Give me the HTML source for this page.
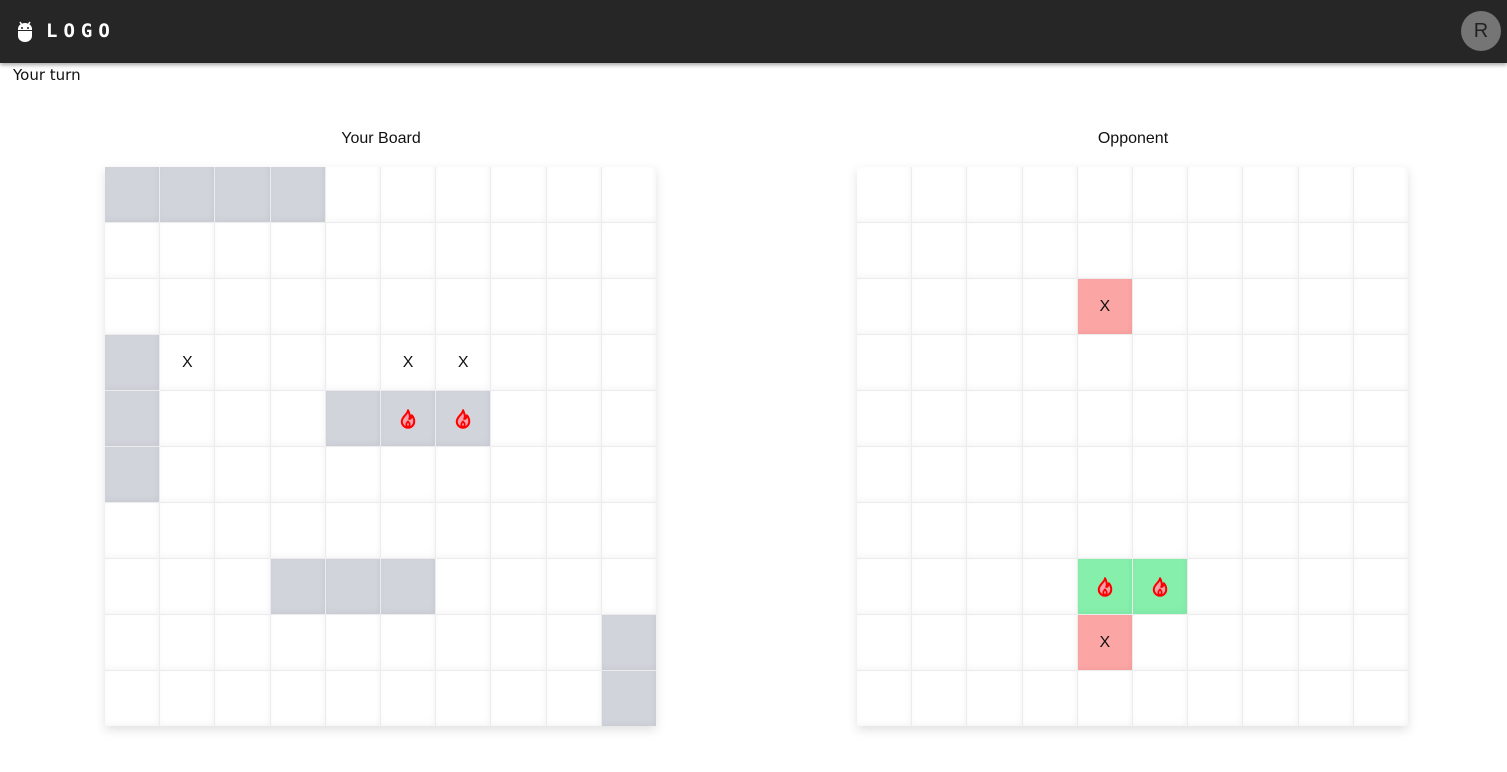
<!DOCTYPE html>
<html><head><meta charset="utf-8"><style>
*{box-sizing:border-box;margin:0;padding:0}
body{width:1507px;height:772px;background:#fff;font-family:"Liberation Sans",sans-serif;position:relative;overflow:hidden}
.hdr{position:absolute;left:0;top:0;width:1507px;height:63px;background:#262626;box-shadow:0 2px 4px rgba(0,0,0,.35);z-index:2}
.logo{position:absolute;left:46px;top:20px;color:#fff;font-family:"DejaVu Sans Mono","Liberation Mono",monospace;font-weight:bold;font-size:19px;letter-spacing:6px}
.av{position:absolute;left:1461px;top:11px;width:40px;height:40px;border-radius:50%;background:#757575;color:#222;font-size:20px;text-align:center;line-height:40px}
.turn{position:absolute;left:13px;top:66px;color:#111;font-family:"DejaVu Sans",sans-serif;font-size:15px}
.ttl{position:absolute;top:130px;font-size:16px;color:#111;width:300px;text-align:center}
.b{position:absolute;top:167px;display:grid;grid-template-columns:repeat(10,54.2px);grid-template-rows:repeat(10,55px);gap:1px;background:#ececef;box-shadow:0 4px 10px rgba(0,0,0,.12)}
.b div{background:#fff;box-shadow:inset 0 -4px 6px rgba(0,0,0,.025),inset -3px 0 4px rgba(0,0,0,.02);display:flex;align-items:center;justify-content:center;font-size:16px;color:#111}
.b div.s{background:#d1d5db}
.b div.r{background:#fca5a5}
.b div.g{background:#86efac}
</style></head><body>
<div class="hdr">
<svg style="position:absolute;left:17px;top:20px" width="16" height="22" viewBox="0 0 16 22"><path d="M3 2l2 3M13 2l-2 3" stroke="#fff" stroke-width="1.5"/><path d="M1 9a7 6 0 0 1 14 0v7a7 6 0 0 1-14 0z" fill="#fff"/><circle cx="5" cy="8" r="1" fill="#262626"/><circle cx="11" cy="8" r="1" fill="#262626"/><rect x="0" y="10" width="16" height="1" fill="#262626"/></svg>
<div class="logo">LOGO</div>
<div class="av">R</div>
</div>
<div class="turn">Your turn</div>
<div class="ttl" style="left:231px">Your Board</div>
<div class="ttl" style="left:983px">Opponent</div>
<svg width="0" height="0" style="position:absolute"><defs><symbol id="f" viewBox="0 0 16 16"><path d="M8 1c0 3-5 5-5 9a5 5 0 0 0 10 0c0-2-1-4-2-5 0 2-1 3-2 3 1-2 0-5-1-7z" fill="#f4a0a8" stroke="#f00" stroke-width="1.6" stroke-linejoin="round"/><path d="M8 10c-1 1-2 2-1 4h2c1-2 0-3-1-4z" fill="none" stroke="#f00" stroke-width="1.4"/></symbol></defs></svg>
<div class="b" style="left:105px">
<div class="s"></div><div class="s"></div><div class="s"></div><div class="s"></div><div></div><div></div><div></div><div></div><div></div><div></div>
<div></div><div></div><div></div><div></div><div></div><div></div><div></div><div></div><div></div><div></div>
<div></div><div></div><div></div><div></div><div></div><div></div><div></div><div></div><div></div><div></div>
<div class="s"></div><div>X</div><div></div><div></div><div></div><div>X</div><div>X</div><div></div><div></div><div></div>
<div class="s"></div><div></div><div></div><div></div><div class="s"></div><div class="s"><svg width="20" height="20"><use href="#f"/></svg></div><div class="s"><svg width="20" height="20"><use href="#f"/></svg></div><div></div><div></div><div></div>
<div class="s"></div><div></div><div></div><div></div><div></div><div></div><div></div><div></div><div></div><div></div>
<div></div><div></div><div></div><div></div><div></div><div></div><div></div><div></div><div></div><div></div>
<div></div><div></div><div></div><div class="s"></div><div class="s"></div><div class="s"></div><div></div><div></div><div></div><div></div>
<div></div><div></div><div></div><div></div><div></div><div></div><div></div><div></div><div></div><div class="s"></div>
<div></div><div></div><div></div><div></div><div></div><div></div><div></div><div></div><div></div><div class="s"></div>
</div>
<div class="b" style="left:857px">
<div></div><div></div><div></div><div></div><div></div><div></div><div></div><div></div><div></div><div></div>
<div></div><div></div><div></div><div></div><div></div><div></div><div></div><div></div><div></div><div></div>
<div></div><div></div><div></div><div></div><div class="r">X</div><div></div><div></div><div></div><div></div><div></div>
<div></div><div></div><div></div><div></div><div></div><div></div><div></div><div></div><div></div><div></div>
<div></div><div></div><div></div><div></div><div></div><div></div><div></div><div></div><div></div><div></div>
<div></div><div></div><div></div><div></div><div></div><div></div><div></div><div></div><div></div><div></div>
<div></div><div></div><div></div><div></div><div></div><div></div><div></div><div></div><div></div><div></div>
<div></div><div></div><div></div><div></div><div class="g"><svg width="20" height="20"><use href="#f"/></svg></div><div class="g"><svg width="20" height="20"><use href="#f"/></svg></div><div></div><div></div><div></div><div></div>
<div></div><div></div><div></div><div></div><div class="r">X</div><div></div><div></div><div></div><div></div><div></div>
<div></div><div></div><div></div><div></div><div></div><div></div><div></div><div></div><div></div><div></div>
</div>
</body></html>
